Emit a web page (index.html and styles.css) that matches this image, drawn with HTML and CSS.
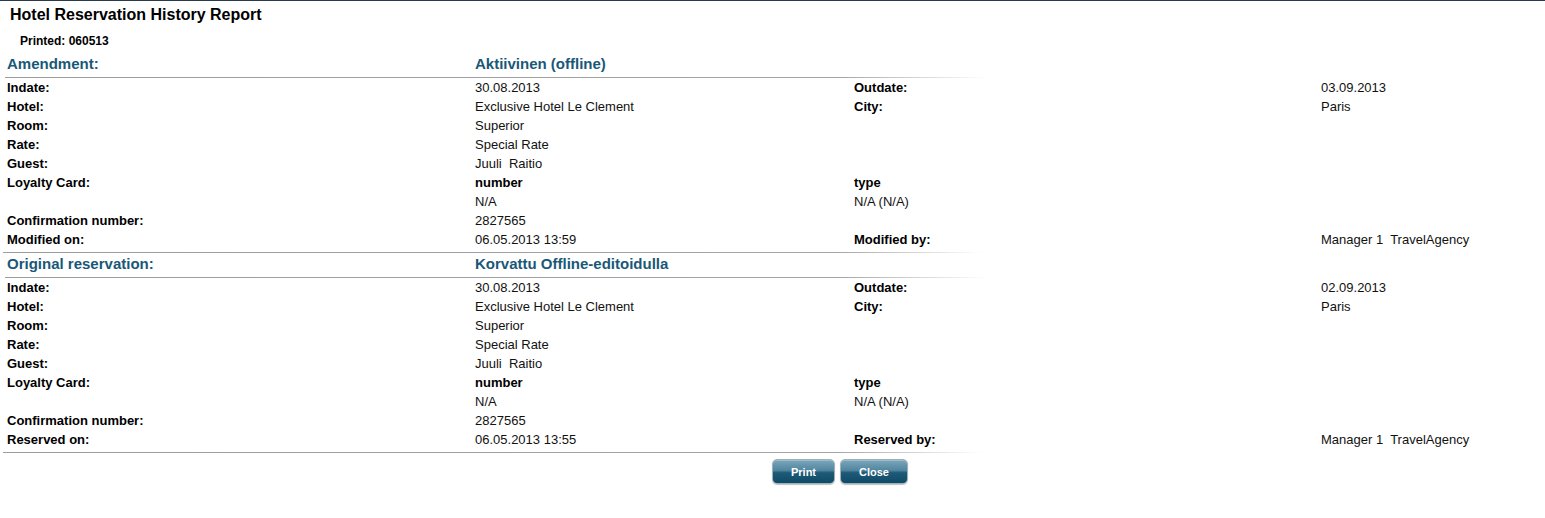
FILE: index.html
```html
<!DOCTYPE html>
<html>
<head>
<meta charset="utf-8">
<title>Hotel Reservation History Report</title>
<link rel="stylesheet" href="styles.css">
</head>
<body>
<div class="page">
  <h1 class="title">Hotel Reservation History Report</h1>
  <div class="printed">Printed: 060513</div>

  <section class="section">
    <div class="head">
      <div class="head-label">Amendment:</div>
      <div class="head-value">Aktiivinen (offline)</div>
    </div>
    <div class="rows">
      <div class="l">Indate:</div><div class="v">30.08.2013</div><div class="l">Outdate:</div><div class="v">03.09.2013</div>
      <div class="l">Hotel:</div><div class="v">Exclusive Hotel Le Clement</div><div class="l">City:</div><div class="v">Paris</div>
      <div class="l">Room:</div><div class="v">Superior</div><div></div><div></div>
      <div class="l">Rate:</div><div class="v">Special Rate</div><div></div><div></div>
      <div class="l">Guest:</div><div class="v">Juuli&nbsp; Raitio</div><div></div><div></div>
      <div class="l">Loyalty Card:</div><div class="l">number</div><div class="l">type</div><div></div>
      <div></div><div class="v">N/A</div><div class="v">N/A (N/A)</div><div></div>
      <div class="l">Confirmation number:</div><div class="v">2827565</div><div></div><div></div>
      <div class="l">Modified on:</div><div class="v">06.05.2013 13:59</div><div class="l">Modified by:</div><div class="v">Manager 1&nbsp; TravelAgency</div>
    </div>
  </section>

  <section class="section">
    <div class="head">
      <div class="head-label">Original reservation:</div>
      <div class="head-value">Korvattu Offline-editoidulla</div>
    </div>
    <div class="rows">
      <div class="l">Indate:</div><div class="v">30.08.2013</div><div class="l">Outdate:</div><div class="v">02.09.2013</div>
      <div class="l">Hotel:</div><div class="v">Exclusive Hotel Le Clement</div><div class="l">City:</div><div class="v">Paris</div>
      <div class="l">Room:</div><div class="v">Superior</div><div></div><div></div>
      <div class="l">Rate:</div><div class="v">Special Rate</div><div></div><div></div>
      <div class="l">Guest:</div><div class="v">Juuli&nbsp; Raitio</div><div></div><div></div>
      <div class="l">Loyalty Card:</div><div class="l">number</div><div class="l">type</div><div></div>
      <div></div><div class="v">N/A</div><div class="v">N/A (N/A)</div><div></div>
      <div class="l">Confirmation number:</div><div class="v">2827565</div><div></div><div></div>
      <div class="l">Reserved on:</div><div class="v">06.05.2013 13:55</div><div class="l">Reserved by:</div><div class="v">Manager 1&nbsp; TravelAgency</div>
    </div>
  </section>

  <div class="actions">
    <button class="btn btn-print" type="button">Print</button>
    <button class="btn btn-close" type="button">Close</button>
  </div>
</div>
</body>
</html>
```

FILE: styles.css
```css
* { box-sizing: border-box; }
html, body { margin: 0; padding: 0; background: #fff; }
body {
  font-family: "Liberation Sans", Arial, sans-serif;
  font-size: 13px;
  color: #000;
}
.page {
  border-top: 1px solid #283a4c;
  min-height: 517px;
}
.title {
  margin: 4px 0 0 10px;
  font-size: 16px;
  line-height: 20px;
  font-weight: bold;
}
.printed {
  margin: 8px 0 0 20px;
  font-size: 12px;
  line-height: 16px;
  font-weight: bold;
}
.section {
  margin-left: 5px;
  width: 980px;
}
.printed + .section { margin-top: 4px; }
.head {
  display: grid;
  grid-template-columns: 468px 1fr;
  padding-left: 2px;
  height: 25px;
  padding-top: 1px;
  font-size: 15px;
  line-height: 19px;
  font-weight: bold;
  color: #1a5877;
  border-bottom: 1px solid transparent;
  border-image: linear-gradient(to right, #9c9c9c 0%, #a4a4a4 85%, #ffffff 100%) 1;
}
.rows {
  display: grid;
  grid-template-columns: 468px 379px 467px 240px;
  grid-auto-rows: 19px;
  padding-left: 2px;
  padding-bottom: 3px;
  line-height: 19px;
  width: 1560px;
  position: relative;
}
.section .rows::after {
  content: "";
  position: absolute;
  left: -2px;
  bottom: -1px;
  width: 980px;
  height: 1px;
  background: linear-gradient(to right, #9c9c9c 0%, #a4a4a4 85%, #ffffff 100%);
}
.section + .section .head { margin-top: 1px; }
.l { font-weight: bold; white-space: nowrap; }
.v { white-space: nowrap; color: #111; }
.actions {
  display: flex;
  gap: 5px;
  padding-left: 772px;
  margin-top: 7px;
}
.btn {
  height: 25px;
  border: 1px solid #9fb0b8;
  border-radius: 5px;
  background: linear-gradient(to bottom, #7aa6bb 0%, #52869f 45%, #1e5a78 55%, #0f4a66 100%);
  color: #fff;
  font-family: "Liberation Sans", Arial, sans-serif;
  font-size: 11px;
  font-weight: bold;
  padding: 0;
  box-shadow: inset 0 1px 0 rgba(255,255,255,0.25), 0 1px 1px rgba(0,0,0,0.25);
}
.btn-print { width: 63px; }
.btn-close { width: 68px; }
```
